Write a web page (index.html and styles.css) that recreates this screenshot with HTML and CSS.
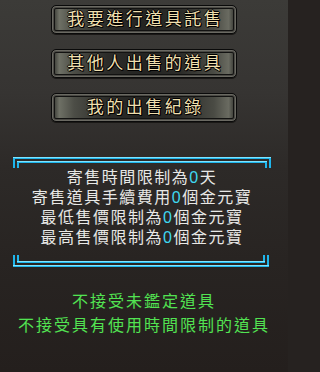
FILE: index.html
```
<!DOCTYPE html>
<html lang="zh-Hant">
<head>
<meta charset="utf-8">
<link rel="stylesheet" href="styles.css">
</head>
<body>
<div class="screen">
  <div class="menu">
    <div class="btn"><span class="label">我要進行道具託售</span></div>
    <div class="btn"><span class="label">其他人出售的道具</span></div>
    <div class="btn"><span class="label">我的出售紀錄</span></div>
  </div>
  <div class="panel">
    <svg class="frame" width="258" height="110" viewBox="0 0 258 110">
      <g fill="#1fb6ec">
        <rect x="0" y="0" width="258" height="2"/>
        <rect x="0" y="0" width="2" height="11"/>
        <rect x="256" y="0" width="2" height="11"/>
        <rect x="4" y="4" width="250" height="2"/>
        <rect x="4" y="4" width="2" height="7"/>
        <rect x="252" y="4" width="2" height="7"/>
        <rect x="0" y="108" width="256" height="2"/>
        <rect x="0" y="98" width="2" height="12"/>
        <rect x="254" y="98" width="2" height="12"/>
        <rect x="4" y="104" width="248" height="2"/>
        <rect x="4" y="98" width="2" height="8"/>
        <rect x="250" y="98" width="2" height="8"/>
      </g>
      <g fill="#7fe4ff">
        <rect x="0" y="0" width="258" height="1"/>
        <rect x="4" y="4" width="250" height="1"/>
        <rect x="0" y="108" width="256" height="1"/>
        <rect x="4" y="104" width="248" height="1"/>
      </g>
    </svg>
    <p class="info">寄售時間限制為<span class="num">0</span>天</p>
    <p class="info">寄售道具手續費用<span class="num">0</span>個金元寶</p>
    <p class="info">最低售價限制為<span class="num">0</span>個金元寶</p>
    <p class="info">最高售價限制為<span class="num">0</span>個金元寶</p>
  </div>
  <div class="notes">
    <p class="note">不接受未鑑定道具</p>
    <p class="note">不接受具有使用時間限制的道具</p>
  </div>
</div>
</body>
</html>
```
FILE: styles.css
```
html {
  background: #262220;
}
html, body {
  margin: 0;
  padding: 0;
}
body {
  width: 288px;
  height: 372px;
  overflow: hidden;
  font-family: "Liberation Sans", "Noto Sans CJK TC", "Noto Sans CJK SC", sans-serif;
}
.screen {
  width: 288px;
  height: 372px;
  background: linear-gradient(180deg, #3c3b38 0%, #363432 25%, #2d2a28 45%, #282422 70%, #241f1d 100%);
  display: flex;
  flex-direction: column;
}
.menu {
  display: flex;
  flex-direction: column;
  align-items: center;
  gap: 15px;
  padding-top: 5px;
}
.btn {
  width: 186px;
  height: 29px;
  box-sizing: border-box;
  border: 1px solid #0a0a0a;
  border-radius: 5px;
  box-shadow: inset 0 0 0 1px #6a6962, inset 0 0 0 2px #4a4944, inset 0 0 0 3px #121211, 0 1px 0 #1a1816;
  background: linear-gradient(90deg, #2a2b27 0%, #6e7065 4%, #4c4d46 12%, #2c2c29 30%, #242422 50%, #2c2c29 70%, #4a4b44 88%, #6a6b61 96%, #2a2b27 100%);
  display: flex;
  align-items: center;
  justify-content: center;
}
.label {
  font-size: 17px;
  line-height: 20px;
  letter-spacing: 2.5px;
  padding-left: 2.5px;
  color: #efdfae;
  text-shadow: 1px 1px 0 #000, -1px 0 0 #000, 0 -1px 0 #000, 1px 0 0 #000, 0 1px 0 #000;
}
.panel {
  position: relative;
  width: 258px;
  height: 110px;
  box-sizing: border-box;
  margin: 35px 0 0 13px;
  padding-top: 11px;
}
.frame {
  position: absolute;
  left: 0;
  top: 0;
}
.info {
  margin: 0;
  font-size: 16px;
  line-height: 20px;
  letter-spacing: 1.5px;
  text-align: center;
  color: #e8e8e6;
}
.num {
  color: #3fd8f0;
}
.notes {
  margin-top: 23px;
}
.note {
  margin: 0;
  font-size: 16px;
  line-height: 24px;
  letter-spacing: 2px;
  text-align: center;
  color: #52e352;
}
```
